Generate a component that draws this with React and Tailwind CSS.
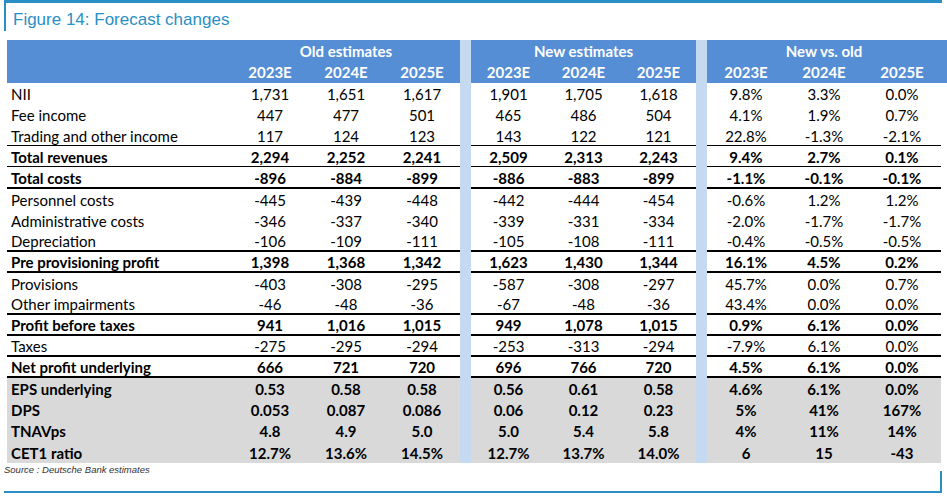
import React from 'react';

const cols = 'grid grid-cols-[225px_76px_76px_76px_11px_75px_75px_75px_11px_78px_78px_78px]';

const rows = [
  { label: 'NII', old: ['1,731', '1,651', '1,617'], next: ['1,901', '1,705', '1,618'], diff: ['9.8%', '3.3%', '0.0%'] },
  { label: 'Fee income', old: ['447', '477', '501'], next: ['465', '486', '504'], diff: ['4.1%', '1.9%', '0.7%'] },
  { label: 'Trading and other income', old: ['117', '124', '123'], next: ['143', '122', '121'], diff: ['22.8%', '-1.3%', '-2.1%'], line: 1 },
  { label: 'Total revenues', bold: true, old: ['2,294', '2,252', '2,241'], next: ['2,509', '2,313', '2,243'], diff: ['9.4%', '2.7%', '0.1%'], line: 1 },
  { label: 'Total costs', bold: true, old: ['-896', '-884', '-899'], next: ['-886', '-883', '-899'], diff: ['-1.1%', '-0.1%', '-0.1%'], line: 2, tall: true },
  { label: 'Personnel costs', old: ['-445', '-439', '-448'], next: ['-442', '-444', '-454'], diff: ['-0.6%', '1.2%', '1.2%'] },
  { label: 'Administrative costs', old: ['-346', '-337', '-340'], next: ['-339', '-331', '-334'], diff: ['-2.0%', '-1.7%', '-1.7%'] },
  { label: 'Depreciation', old: ['-106', '-109', '-111'], next: ['-105', '-108', '-111'], diff: ['-0.4%', '-0.5%', '-0.5%'], line: 2 },
  { label: 'Pre provisioning profit', bold: true, old: ['1,398', '1,368', '1,342'], next: ['1,623', '1,430', '1,344'], diff: ['16.1%', '4.5%', '0.2%'], line: 2 },
  { label: 'Provisions', old: ['-403', '-308', '-295'], next: ['-587', '-308', '-297'], diff: ['45.7%', '0.0%', '0.7%'] },
  { label: 'Other impairments', old: ['-46', '-48', '-36'], next: ['-67', '-48', '-36'], diff: ['43.4%', '0.0%', '0.0%'], line: 2 },
  { label: 'Profit before taxes', bold: true, old: ['941', '1,016', '1,015'], next: ['949', '1,078', '1,015'], diff: ['0.9%', '6.1%', '0.0%'], line: 2 },
  { label: 'Taxes', old: ['-275', '-295', '-294'], next: ['-253', '-313', '-294'], diff: ['-7.9%', '6.1%', '0.0%'], line: 2 },
  { label: 'Net profit underlying', bold: true, old: ['666', '721', '720'], next: ['696', '766', '720'], diff: ['4.5%', '6.1%', '0.0%'], line: 2 },
  { label: 'EPS underlying', bold: true, gray: true, old: ['0.53', '0.58', '0.58'], next: ['0.56', '0.61', '0.58'], diff: ['4.6%', '6.1%', '0.0%'] },
  { label: 'DPS', bold: true, gray: true, old: ['0.053', '0.087', '0.086'], next: ['0.06', '0.12', '0.23'], diff: ['5%', '41%', '167%'] },
  { label: 'TNAVps', bold: true, gray: true, old: ['4.8', '4.9', '5.0'], next: ['5.0', '5.4', '5.8'], diff: ['4%', '11%', '14%'] },
  { label: 'CET1 ratio', bold: true, gray: true, old: ['12.7%', '13.6%', '14.5%'], next: ['12.7%', '13.7%', '14.0%'], diff: ['6', '15', '-43'], tall: true },
];

const lineClass = (line) => (line === 2 ? 'border-b-2 border-black' : line === 1 ? 'border-b border-black' : '');

const Sep = () => <div className="bg-[#c5d9f1]" />;

const DataRow = ({ r }) => {
  const cell = `flex items-center pt-[2px] ${lineClass(r.line)} ${r.gray ? 'bg-[#d9d9d9]' : ''}`;
  const num = `${cell} justify-center`;
  return (
    <div className={`${cols} ${r.tall ? 'h-[22px]' : 'h-[21px]'} ${r.bold ? 'font-bold' : ''}`}>
      <div className={`${cell} pl-[4px]`}>{r.label}</div>
      {r.old.map((v, i) => <div key={'o' + i} className={num}>{v}</div>)}
      <Sep />
      {r.next.map((v, i) => <div key={'n' + i} className={num}>{v}</div>)}
      <Sep />
      {r.diff.map((v, i) => <div key={'d' + i} className={num}>{v}</div>)}
    </div>
  );
};

export default function App() {
  const years = ['2023E', '2024E', '2025E'];
  return (
    <div className="w-[947px] h-[498px] bg-white text-black font-['Lato',sans-serif] text-[15px] leading-none">
      <div className="ml-[4px] mr-[5px] border-t-[3px] border-[#2a8fc4]">
        <div className="border-l-2 border-[#2a8fc4] h-[28px] pl-[7px] pt-[8px] font-['Liberation_Sans',Arial,sans-serif] text-[17px] text-[#2a8fc4]">
          Figure 14: Forecast changes
        </div>
      </div>

      <div className="ml-[7px] mt-[9px]">
        <div className="bg-[#558ed5] text-white font-bold">
          <div className={`${cols} h-[21px]`}>
            <div />
            <div className="col-span-3 flex items-center justify-center pt-[1px]">Old estimates</div>
            <Sep />
            <div className="col-span-3 flex items-center justify-center pt-[1px]">New estimates</div>
            <Sep />
            <div className="col-span-3 flex items-center justify-center pt-[1px]">New vs. old</div>
          </div>
          <div className={`${cols} h-[22px]`}>
            <div />
            {years.map((y) => <div key={'o' + y} className="flex items-center justify-center pt-[1px]">{y}</div>)}
            <Sep />
            {years.map((y) => <div key={'n' + y} className="flex items-center justify-center pt-[1px]">{y}</div>)}
            <Sep />
            {years.map((y) => <div key={'d' + y} className="flex items-center justify-center pt-[1px]">{y}</div>)}
          </div>
        </div>
        {rows.map((r) => <DataRow key={r.label} r={r} />)}
      </div>

      <div className="ml-[4px] w-[938px] h-[30px] border-b-2 border-[#2a8fc4] flex">
        <div className="flex-1 pt-[2px] font-['Liberation_Sans',Arial,sans-serif] italic text-[9.5px] text-[#333]">
          Source : Deutsche Bank estimates
        </div>
        <div className="mt-[8px] border-r-2 border-[#2a8fc4]" />
      </div>
    </div>
  );
}
